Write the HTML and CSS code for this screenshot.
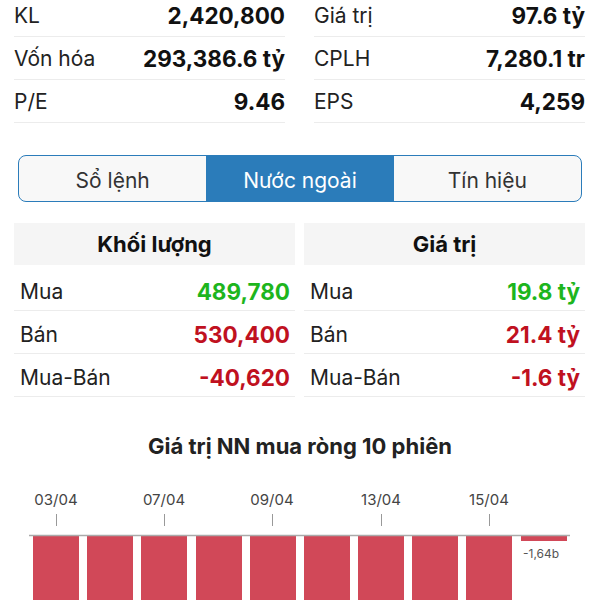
FILE: index.html
```html
<!DOCTYPE html>
<html lang="vi">
<head>
<meta charset="utf-8">
<link rel="stylesheet" href="styles.css">
</head>
<body>
<section class="stats">
  <div class="col">
    <div class="row"><span class="lbl">KL</span><span class="val">2,420,800</span></div>
    <div class="row"><span class="lbl">Vốn hóa</span><span class="val">293,386.6 tỷ</span></div>
    <div class="row"><span class="lbl">P/E</span><span class="val">9.46</span></div>
  </div>
  <div class="col">
    <div class="row"><span class="lbl">Giá trị</span><span class="val">97.6 tỷ</span></div>
    <div class="row"><span class="lbl">CPLH</span><span class="val">7,280.1 tr</span></div>
    <div class="row"><span class="lbl">EPS</span><span class="val">4,259</span></div>
  </div>
</section>

<nav class="tabs">
  <div class="tab">Sổ lệnh</div>
  <div class="tab active">Nước ngoài</div>
  <div class="tab">Tín hiệu</div>
</nav>

<section class="foreign">
  <div class="fcol">
    <div class="fhead">Khối lượng</div>
    <div class="frow"><span class="lbl">Mua</span><span class="val up">489,780</span></div>
    <div class="frow"><span class="lbl">Bán</span><span class="val down">530,400</span></div>
    <div class="frow"><span class="lbl">Mua-Bán</span><span class="val down">-40,620</span></div>
  </div>
  <div class="fcol">
    <div class="fhead">Giá trị</div>
    <div class="frow"><span class="lbl">Mua</span><span class="val up">19.8 tỷ</span></div>
    <div class="frow"><span class="lbl">Bán</span><span class="val down">21.4 tỷ</span></div>
    <div class="frow"><span class="lbl">Mua-Bán</span><span class="val down">-1.6 tỷ</span></div>
  </div>
</section>

<h2 class="chart-title">Giá trị NN mua ròng 10 phiên</h2>

<svg class="chart" width="600" height="130" viewBox="0 470 600 130">
  <g class="dates">
    <text x="56" y="505">03/04</text>
    <text x="164" y="505">07/04</text>
    <text x="272" y="505">09/04</text>
    <text x="381" y="505">13/04</text>
    <text x="489" y="505">15/04</text>
  </g>
  <g class="ticks">
    <line x1="56.5" y1="514" x2="56.5" y2="526"/>
    <line x1="164.5" y1="514" x2="164.5" y2="526"/>
    <line x1="272.5" y1="514" x2="272.5" y2="526"/>
    <line x1="381.5" y1="514" x2="381.5" y2="526"/>
    <line x1="489.5" y1="514" x2="489.5" y2="526"/>
  </g>
  <g class="bars">
    <rect x="33" y="536" width="46" height="70"/>
    <rect x="87" y="536" width="46" height="70"/>
    <rect x="141" y="536" width="46" height="70"/>
    <rect x="196" y="536" width="46" height="70"/>
    <rect x="250" y="536" width="46" height="70"/>
    <rect x="304" y="536" width="46" height="70"/>
    <rect x="358" y="536" width="46" height="70"/>
    <rect x="412" y="536" width="46" height="70"/>
    <rect x="466" y="536" width="46" height="70"/>
    <rect x="521" y="536" width="46" height="5"/>
  </g>
  <line class="axis" x1="29" y1="535.5" x2="570" y2="535.5"/>
  <text class="bar-lbl" x="523" y="558">-1,64b</text>
</svg>
</body>
</html>
```
FILE: styles.css
```css
html, body {
  margin: 0;
  padding: 0;
  background: #ffffff;
  width: 600px;
  height: 600px;
  overflow: hidden;
  font-family: Inter, "Noto Sans", "Liberation Sans", sans-serif;
  color: #222;
}

.stats {
  display: grid;
  grid-template-columns: 271px 271px;
  column-gap: 29px;
  padding-left: 14px;
  margin-top: -6px;
}

.row {
  height: 42px;
  border-bottom: 1px solid #ececec;
  display: flex;
  align-items: center;
  justify-content: space-between;
  font-size: 21px;
}

.lbl {
  color: #222;
  font-weight: 400;
  font-size: 21px;
}

.val {
  color: #111;
  font-weight: 700;
  font-size: 22.5px;
}

.tabs {
  margin: 32px 18px 0 18px;
  height: 45px;
  display: grid;
  grid-template-columns: 1fr 1fr 1fr;
  border: 1.5px solid #2b7cba;
  border-radius: 8px;
  overflow: hidden;
  background: #f8f8f8;
}

.tab {
  display: flex;
  align-items: center;
  justify-content: center;
  padding-top: 3px;
  font-size: 21px;
  color: #333;
}

.tab.active {
  background: #2b7cba;
  color: #ffffff;
}

.foreign {
  display: grid;
  grid-template-columns: 281px 281px;
  column-gap: 9px;
  padding-left: 14px;
  margin-top: 21px;
}

.fhead {
  height: 42px;
  background: #f5f5f5;
  display: flex;
  align-items: center;
  justify-content: center;
  font-size: 22px;
  font-weight: 700;
  color: #111;
  margin-bottom: 3px;
}

.frow {
  height: 37px;
  padding: 5px 5px 0 6px;
  border-bottom: 1px solid #ececec;
  display: flex;
  align-items: center;
  justify-content: space-between;
}

.up { color: #1db51d; }
.down { color: #c0111f; }

.chart-title {
  margin: 36px 0 0 0;
  text-align: center;
  font-size: 22px;
  line-height: 26px;
  font-weight: 700;
  color: #222;
}

.chart {
  display: block;
  margin-top: 11px;
}

.dates text {
  font-family: Inter, "Liberation Sans", sans-serif;
  font-size: 15px;
  fill: #444;
  text-anchor: middle;
}

.ticks line {
  stroke: #999;
  stroke-width: 1;
}

.bars rect {
  fill: #d14858;
}

.axis {
  stroke: #aaa;
  stroke-width: 1.5;
}

.bar-lbl {
  font-family: Inter, "Liberation Sans", sans-serif;
  font-size: 12px;
  fill: #555;
}
```
